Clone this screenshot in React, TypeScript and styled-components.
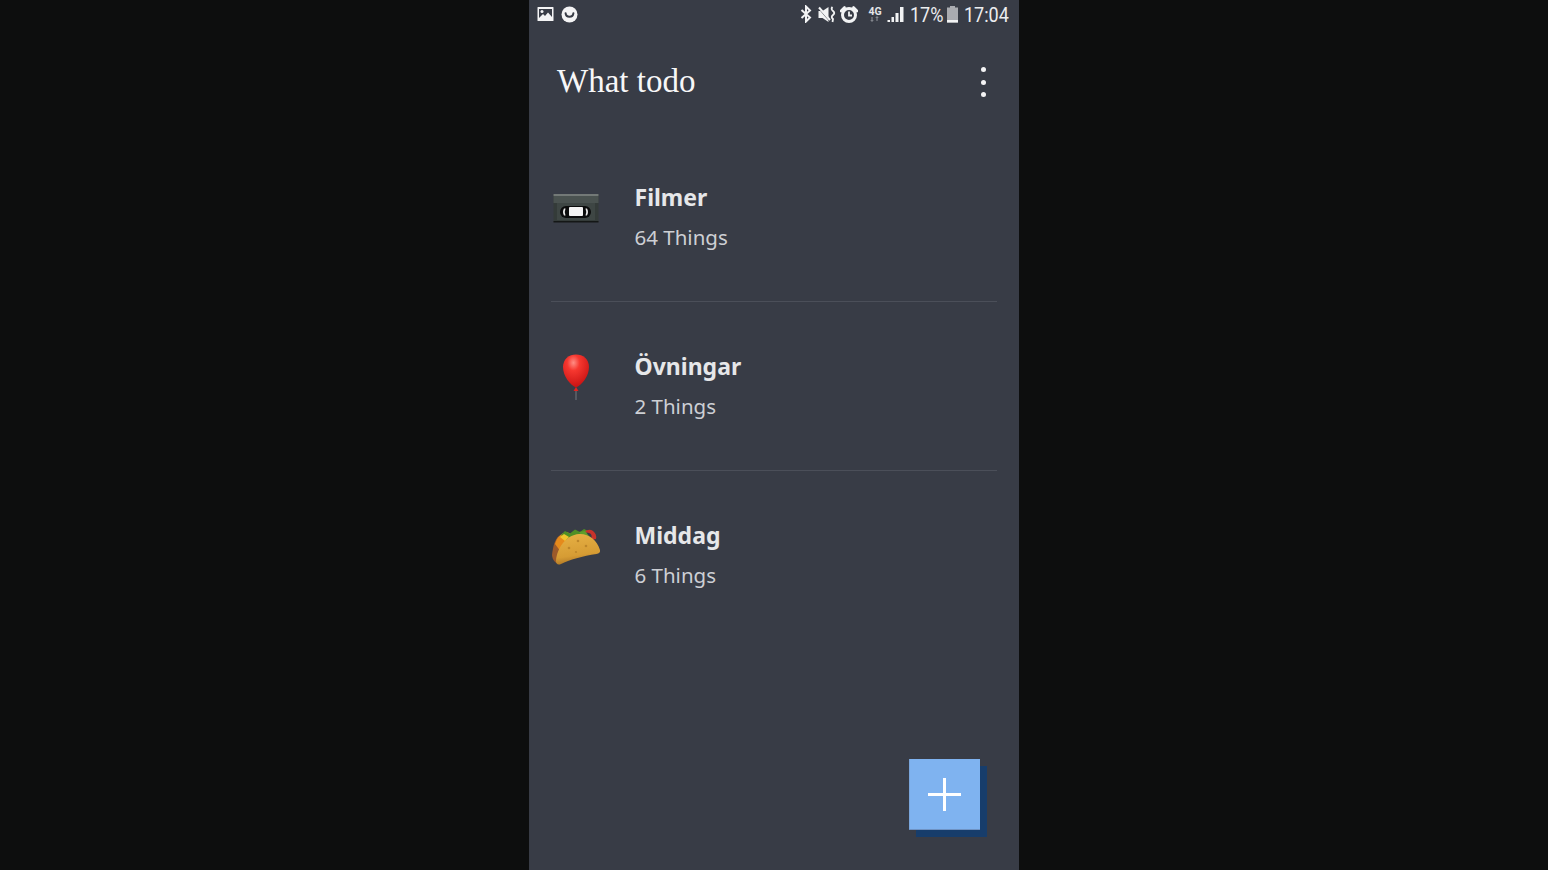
import React from "react";
import styled, { createGlobalStyle } from "styled-components";

const Global = createGlobalStyle`
  html, body { margin: 0; padding: 0; height: 100%; background: #0d0e0e; overflow: hidden; }
  #root { height: 100%; }
`;

const Stage = styled.div`
  height: 870px;
  display: flex;
  justify-content: center;
  background: #0d0e0e;
`;

const Phone = styled.div`
  position: relative;
  width: 490px;
  height: 870px;
  background: #383c46;
  display: flex;
  flex-direction: column;
`;

const StatusBar = styled.div`
  height: 28px;
  display: flex;
  align-items: center;
  justify-content: space-between;
  padding: 0 9px 0 8px;
  color: #f2f3f4;
`;

const StatusGroup = styled.div`
  display: flex;
  align-items: center;
`;

const StatusIcon = styled.svg<{ $gap?: number }>`
  display: block;
  margin-right: ${(p) => p.$gap ?? 0}px;
`;

const StatusText = styled.span<{ $width: number }>`
  display: inline-block;
  width: ${(p) => p.$width}px;
  font-family: Roboto, sans-serif;
  font-size: 20px;
  line-height: 28px;
  white-space: nowrap;
  transform: scaleX(0.9);
  transform-origin: left center;
  color: #eceef0;
  margin-top: 2px;
`;

const Header = styled.header`
  height: 105px;
  display: flex;
  align-items: flex-start;
  justify-content: space-between;
  padding: 34px 26px 0 28px;
  box-sizing: border-box;
`;

const Title = styled.h1`
  margin: 0;
  font-family: "Liberation Serif", serif;
  font-weight: 400;
  font-size: 33px;
  line-height: 38px;
  color: #f7f7f8;
`;

const MenuButton = styled.div`
  width: 19px;
  height: 30px;
  margin-top: 5px;
  display: flex;
  flex-direction: column;
  align-items: center;
  justify-content: space-between;
`;

const MenuDot = styled.span`
  width: 5px;
  height: 5px;
  border-radius: 50%;
  background: #f4f4f5;
`;

const List = styled.ul`
  margin: 0;
  padding: 0 22px;
  list-style: none;
`;

const Row = styled.li`
  height: 168px;
  display: flex;
  align-items: flex-start;
  border-bottom: 1px solid #4b4f59;

  &:last-child {
    border-bottom: none;
  }
`;

const EmojiCell = styled.div`
  width: 83.5px;
  height: 168px;
  flex: none;
  margin-left: -2px;
  margin-right: 2px;
`;

const EmojiArt = styled.svg<{ $top: number; $left: number }>`
  display: block;
  margin-top: ${(p) => p.$top}px;
  margin-left: ${(p) => p.$left}px;
`;

const RowText = styled.div`
  padding-top: 46px;
  display: flex;
  flex-direction: column;
`;

const RowTitle = styled.div`
  font-family: "Noto Sans", sans-serif;
  font-weight: 700;
  font-size: 23px;
  line-height: 36px;
  color: #e6e7e9;
`;

const RowCount = styled.div`
  font-family: "Noto Sans", sans-serif;
  font-weight: 400;
  font-size: 20.5px;
  line-height: 36px;
  margin-top: 4px;
  color: #cdcfd4;
`;

const Fab = styled.button`
  position: absolute;
  left: 380px;
  top: 759px;
  width: 71px;
  height: 71px;
  padding: 0;
  border: none;
  border-radius: 0;
  background: #7fb3f0;
  box-shadow: inset 0 -1px 0 #6f93c4, inset 1px 0 0 #7aa6dc, 7px 7px 0 #173d6b;
  display: flex;
  align-items: center;
  justify-content: center;
`;

const Vhs = () => (
  <EmojiArt $top={60} $left={4} width="46" height="30" viewBox="0 0 46 30">
    <rect x="0.5" y="1" width="45" height="28" fill="#343b39" />
    <rect x="0.5" y="1" width="45" height="2" fill="#737977" />
    <rect x="0.5" y="3" width="45" height="7" fill="#4a5250" />
    <rect x="0.5" y="28" width="45" height="1.5" fill="#141716" />
    <rect x="4" y="10" width="38" height="17" fill="#3e4644" />
    <rect x="7" y="13" width="31" height="12" rx="6" fill="#0b0c0c" />
    <path d="M11 15.5 Q9 19 11 22.5 L12.5 22.5 Q11 19 12.5 15.5 Z" fill="#e8e8e8" />
    <path d="M34 15.5 Q36 19 34 22.5 L32.5 22.5 Q34 19 32.5 15.5 Z" fill="#e8e8e8" />
    <rect x="16" y="14" width="14" height="9" rx="1" fill="#f4f4f4" />
  </EmojiArt>
);

const Balloon = () => (
  <EmojiArt $top={52} $left={13} width="28" height="47" viewBox="0 0 28 47">
    <defs>
      <radialGradient id="balloonFill" cx="0.4" cy="0.25" r="0.8">
        <stop offset="0" stopColor="#ff8d84" />
        <stop offset="0.3" stopColor="#f6372f" />
        <stop offset="1" stopColor="#c40f10" />
      </radialGradient>
    </defs>
    <path d="M14 33.5 C8 31 1 22 1 13 C1 5 7 0.5 14 0.5 C21 0.5 27 5 27 13 C27 22 20 31 14 33.5 Z" fill="url(#balloonFill)" />
    <path d="M11.5 37 L14 33 L16.5 37 Z" fill="#e0231f" />
    <rect x="13.5" y="37" width="1" height="9" fill="#73767c" />
  </EmojiArt>
);

const Taco = () => (
  <EmojiArt $top={57} $left={2} width="50" height="38" viewBox="0 0 50 38">
    <defs>
      <linearGradient id="shellFill" x1="0.3" y1="0" x2="0.5" y2="1">
        <stop offset="0" stopColor="#e6b044" />
        <stop offset="0.7" stopColor="#d69c34" />
        <stop offset="1" stopColor="#a87022" />
      </linearGradient>
    </defs>
    <path d="M1 27 C2 18 4 11 8 8 L14 20 L8 36 C4 35 1.5 32 1 27 Z" fill="#9c5a2a" />
    <path d="M4 16 C6 9 10 5 16 4 L22 7 L10 24 Z" fill="#e58a1c" />
    <path d="M10 7 L14 3 L19 5.5 L24 1.5 L29 4 L33 1 L37 3 L30 10 L16 13 Z" fill="#4f8f26" />
    <path d="M9 9 L13 6 L18 9 L14 13 Z" fill="#f0c52e" />
    <path d="M33 4 Q38 0 42 3 Q46 6 45 11 L40 12 Q42 6 38 5 Z" fill="#c8322b" />
    <path d="M28 4 L34 3 L38 8 L31 9 Z" fill="#5f9e2c" />
    <path d="M5 33 C6 20 15 7 28 6 C38 5.5 46 12 49 22 C49.5 24.5 48 25.5 45.5 26 C32 28 18 32 10 36 C7 37.5 5 36 5 33 Z" fill="url(#shellFill)" />
    <circle cx="18" cy="20" r="1.3" fill="#bd862a" />
    <circle cx="27" cy="13" r="1.3" fill="#bd862a" />
    <circle cx="35" cy="18" r="1.3" fill="#bd862a" />
    <circle cx="25" cy="24" r="1.1" fill="#bd862a" />
  </EmojiArt>
);

const items = [
  { name: "Filmer", count: "64 Things", art: <Vhs /> },
  { name: "Övningar", count: "2 Things", art: <Balloon /> },
  { name: "Middag", count: "6 Things", art: <Taco /> },
];

export default function App() {
  return (
    <Stage>
      <Global />
      <Phone>
        <StatusBar>
          <StatusGroup>
            <StatusIcon $gap={7} width="17" height="16" viewBox="0 0 17 16">
              <path fillRule="evenodd" d="M1 1h15a.5.5 0 0 1 .5.5v13a.5.5 0 0 1-.5.5H1a.5.5 0 0 1-.5-.5v-13A.5.5 0 0 1 1 1zm1 3v8l4-4 2 2 3-3.5 4 4.5V3H2z" fill="#f4f4f5" />
              <circle cx="5" cy="5.5" r="1.5" fill="#f4f4f5" />
            </StatusIcon>
            <StatusIcon width="17" height="17" viewBox="0 0 17 17">
              <circle cx="8.5" cy="8.5" r="8" fill="#f4f4f5" />
              <path d="M4.6 7.2 C5 12 12 12 12.4 7.2" fill="none" stroke="#383c46" strokeWidth="2" strokeLinecap="round" />
            </StatusIcon>
          </StatusGroup>
          <StatusGroup>
            <StatusIcon $gap={6} width="12" height="18" viewBox="0 0 12 18">
              <path d="M1.5 5 L10 12.5 L6 16.5 V1.5 L10 5.5 L1.5 13" fill="none" stroke="#f2f3f4" strokeWidth="2" />
            </StatusIcon>
            <StatusIcon $gap={3} width="19" height="17" viewBox="0 0 19 17">
              <path d="M0.5 5h4l6-4v15l-6-4h-4z" fill="#f2f3f4" />
              <path d="M2 3.5 L12 15" stroke="#383c46" strokeWidth="1.5" />
              <path d="M1 1.5 L12 14" stroke="#f2f3f4" strokeWidth="2" />
              <path d="M14.5 1 Q12.5 3 15 5 Q17.5 7 15 9 Q12.5 11 15 13 L14.5 16" fill="none" stroke="#f2f3f4" strokeWidth="1.8" />
            </StatusIcon>
            <StatusIcon $gap={10} width="18" height="17" viewBox="0 0 18 17">
              <circle cx="9" cy="9" r="6.5" fill="none" stroke="#f2f3f4" strokeWidth="3" />
              <path d="M9 5.5V9.5H12" fill="none" stroke="#f2f3f4" strokeWidth="1.8" />
              <path d="M1 5 L4.5 1.5 M17 5 L13.5 1.5" stroke="#f2f3f4" strokeWidth="2.6" strokeLinecap="round" />
            </StatusIcon>
            <StatusIcon $gap={5} width="14" height="17" viewBox="0 0 14 17">
              <text x="0.5" y="9" fontFamily="Roboto, sans-serif" fontWeight="700" fontSize="10.5" fill="#e4e5e7">4G</text>
              <path d="M4 11v4M2.8 14l1.2 1.5L5.2 14M9 15v-4M7.8 12L9 10.5 10.2 12" stroke="#8f9298" strokeWidth="1" fill="none" />
            </StatusIcon>
            <StatusIcon $gap={6} width="17" height="17" viewBox="0 0 17 17">
              <rect x="0.5" y="14" width="2.5" height="2" fill="#f2f3f4" />
              <rect x="4.5" y="11" width="2.5" height="5" fill="#f2f3f4" />
              <rect x="8.5" y="7" width="3" height="9" fill="#f2f3f4" />
              <rect x="13" y="1" width="3.5" height="15" fill="#f2f3f4" />
            </StatusIcon>
            <StatusText $width={37}>17%</StatusText>
            <StatusIcon $gap={6} width="11" height="17" viewBox="0 0 11 17">
              <rect x="3" y="0" width="5" height="2" fill="#a9abb0" />
              <rect x="0" y="1.5" width="11" height="15" fill="#a9abb0" />
              <rect x="0" y="14" width="11" height="2.5" fill="#f2f3f4" />
            </StatusIcon>
            <StatusText $width={46}>17:04</StatusText>
          </StatusGroup>
        </StatusBar>
        <Header>
          <Title>What todo</Title>
          <MenuButton>
            <MenuDot />
            <MenuDot />
            <MenuDot />
          </MenuButton>
        </Header>
        <List>
          {items.map((item) => (
            <Row key={item.name}>
              <EmojiCell>{item.art}</EmojiCell>
              <RowText>
                <RowTitle>{item.name}</RowTitle>
                <RowCount>{item.count}</RowCount>
              </RowText>
            </Row>
          ))}
        </List>
        <Fab aria-label="Add">
          <svg width="33" height="33" viewBox="0 0 33 33">
            <path d="M16.5 0V33M0 16.5H33" stroke="#fff" strokeWidth="3" />
          </svg>
        </Fab>
      </Phone>
    </Stage>
  );
}
